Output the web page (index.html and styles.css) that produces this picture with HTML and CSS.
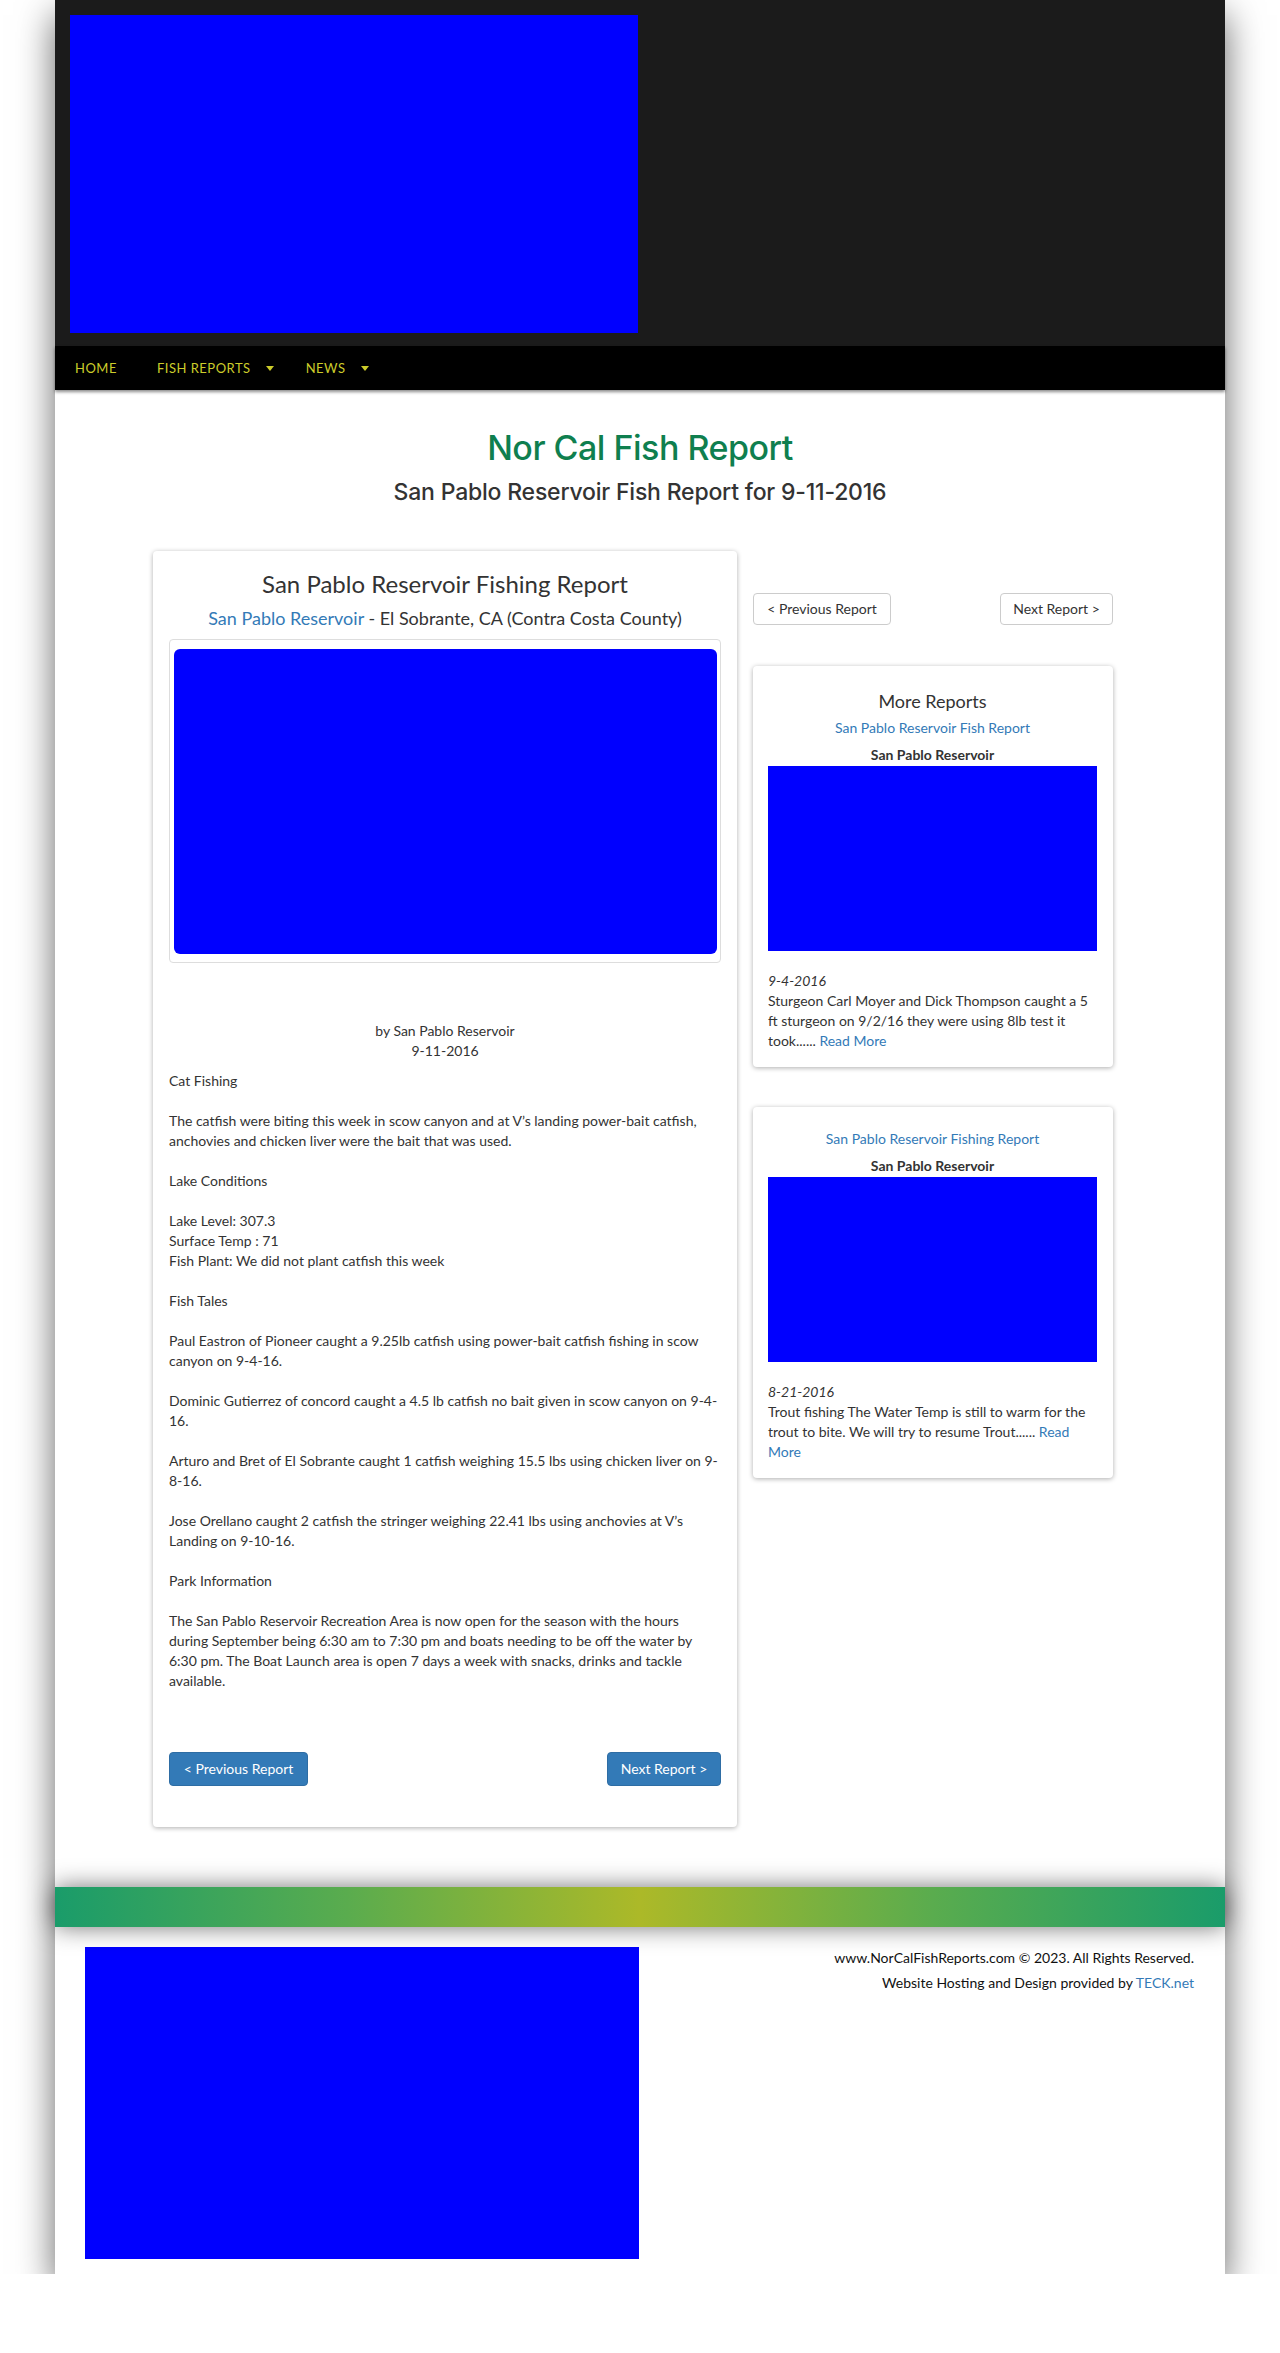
FILE: index.html
```html
<!DOCTYPE html>
<html lang="en">
<head>
<meta charset="utf-8">
<title>San Pablo Reservoir Fish Report for 9-11-2016 - Nor Cal Fish Report</title>
<link rel="stylesheet" href="styles.css">
</head>
<body>
<div class="page">
  <header class="masthead">
    <div class="logo"></div>
  </header>
  <nav class="nav">
    <a class="nav-item" href="#">HOME</a>
    <a class="nav-item has-caret" href="#">FISH REPORTS<span class="caret"></span></a>
    <a class="nav-item has-caret" href="#">NEWS<span class="caret"></span></a>
  </nav>

  <main class="main">
    <div class="titles">
      <h1 class="site-title">Nor Cal Fish Report</h1>
      <h2 class="page-title">San Pablo Reservoir Fish Report for 9-11-2016</h2>
    </div>

    <div class="row">
      <article class="card report">
        <h3 class="report-title">San Pablo Reservoir Fishing Report</h3>
        <div class="report-loc"><a href="#">San Pablo Reservoir</a> - El Sobrante, CA (Contra Costa County)</div>
        <div class="thumb"><div class="thumb-img"></div></div>
        <div class="byline">by San Pablo Reservoir<br>9-11-2016</div>
        <div class="report-body">
          <p>Cat Fishing</p>
          <p>The catfish were biting this week in scow canyon and at V’s landing power-bait catfish, anchovies and chicken liver were the bait that was used.</p>
          <p>Lake Conditions</p>
          <p>Lake Level: 307.3<br>Surface Temp : 71<br>Fish Plant: We did not plant catfish this week</p>
          <p>Fish Tales</p>
          <p>Paul Eastron of Pioneer caught a 9.25lb catfish using power-bait catfish fishing in scow canyon on 9-4-16.</p>
          <p>Dominic Gutierrez of concord caught a 4.5 lb catfish no bait given in scow canyon on 9-4-16.</p>
          <p>Arturo and Bret of El Sobrante caught 1 catfish weighing 15.5 lbs using chicken liver on 9-8-16.</p>
          <p>Jose Orellano caught 2 catfish the stringer weighing 22.41 lbs using anchovies at V’s Landing on 9-10-16.</p>
          <p>Park Information</p>
          <p>The San Pablo Reservoir Recreation Area is now open for the season with the hours during September being 6:30 am to 7:30 pm and boats needing to be off the water by 6:30 pm. The Boat Launch area is open 7 days a week with snacks, drinks and tackle available.</p>
        </div>
        <div class="pager">
          <a class="btn btn-primary prev" href="#">&lt; Previous Report</a>
          <a class="btn btn-primary next" href="#">Next Report &gt;</a>
        </div>
      </article>

      <aside class="side">
        <div class="pager side-pager">
          <a class="btn btn-default prev" href="#">&lt; Previous Report</a>
          <a class="btn btn-default next" href="#">Next Report &gt;</a>
        </div>

        <div class="card mini">
          <h4 class="mini-heading">More Reports</h4>
          <a class="mini-link" href="#">San Pablo Reservoir Fish Report</a>
          <div class="mini-name">San Pablo Reservoir</div>
          <div class="mini-img"></div>
          <div class="mini-date">9-4-2016</div>
          <div class="mini-text">Sturgeon Carl Moyer and Dick Thompson caught a 5 ft sturgeon on 9/2/16 they were using 8lb test it took...... <a href="#">Read More</a></div>
        </div>

        <div class="card mini">
          <a class="mini-link" href="#">San Pablo Reservoir Fishing Report</a>
          <div class="mini-name">San Pablo Reservoir</div>
          <div class="mini-img"></div>
          <div class="mini-date">8-21-2016</div>
          <div class="mini-text">Trout fishing The Water Temp is still to warm for the trout to bite. We will try to resume Trout...... <a href="#">Read More</a></div>
        </div>
      </aside>
    </div>
  </main>

  <div class="footer-bar"></div>
  <footer class="footer">
    <div class="footer-logo"></div>
    <div class="footer-text">
      <p>www.NorCalFishReports.com © 2023. All Rights Reserved.</p>
      <p>Website Hosting and Design provided by <a href="#">TECK.net</a></p>
    </div>
  </footer>
</div>
</body>
</html>
```

FILE: styles.css
```css
* { box-sizing: border-box; }

html, body {
  margin: 0;
  padding: 0;
  background: #fff;
}

body {
  font-family: "Lato", "Liberation Sans", sans-serif;
  font-size: 14px;
  line-height: 20px;
  color: #333;
}

a { color: #337ab7; text-decoration: none; }

.page {
  width: 1170px;
  margin: 0 auto;
  background: #fff;
  box-shadow: 0 15px 35px rgba(0, 0, 0, 0.6);
}

/* Header */
.masthead {
  background: #1b1b1b;
  padding: 15px 15px 13px;
}

.logo {
  width: 568px;
  height: 318px;
  background: #0000ff;
}

.nav {
  display: flex;
  align-items: center;
  height: 44px;
  background: #000;
  padding-left: 20px;
  box-shadow: 0 2px 3px rgba(0, 0, 0, 0.45);
  position: relative;
}

.nav-item {
  display: flex;
  align-items: center;
  color: #cccc2a;
  font-size: 13px;
  letter-spacing: 0.5px;
  margin-right: 40px;
}

.nav-item.has-caret {
  margin-right: 32px;
}

.caret {
  display: inline-block;
  width: 0;
  height: 0;
  margin-left: 15px;
  border-left: 4px solid transparent;
  border-right: 4px solid transparent;
  border-top: 5px solid #cccc2a;
}

/* Main */
.main {
  padding: 0 98px 60px;
}

.titles {
  text-align: center;
  padding-top: 38px;
}

.site-title {
  font-family: "Inter", "Liberation Sans", sans-serif;
  font-weight: 500;
  font-size: 34px;
  line-height: 40px;
  color: #0f7f4f;
  margin: 0;
  letter-spacing: -0.5px;
}

.page-title {
  font-family: "Inter", "Liberation Sans", sans-serif;
  font-weight: 500;
  font-size: 23px;
  line-height: 30px;
  color: #333;
  margin: 9px 0 0;
  letter-spacing: -0.2px;
}

.row {
  display: flex;
  align-items: flex-start;
  gap: 16px;
  margin-top: 44px;
}

.card {
  background: #fff;
  border-radius: 4px;
  box-shadow: 0 1px 5px rgba(0, 0, 0, 0.32);
}

.report {
  width: 584px;
  padding: 16px 16px 41px;
}

.report-title {
  margin: 0;
  font-size: 24px;
  line-height: 34px;
  font-weight: 400;
  text-align: center;
  color: #333;
}

.report-loc {
  text-align: center;
  font-size: 18px;
  line-height: 22px;
  margin-top: 6px;
}

.thumb {
  margin-top: 10px;
  border: 1px solid #ddd;
  border-radius: 4px;
  padding: 9px 3px 8px 4px;
}

.thumb-img {
  height: 305px;
  background: #0000ff;
  border-radius: 6px;
}

.byline {
  margin-top: 58px;
  text-align: center;
}

.report-body {
  margin-top: 10px;
}

.report-body p {
  margin: 0 0 20px;
}

.report-body p:last-child { margin-bottom: 0; }

.pager {
  display: flex;
  justify-content: space-between;
}

.report .pager {
  margin-top: 61px;
}

.btn {
  display: inline-flex;
  align-items: center;
  justify-content: center;
  border-radius: 4px;
  border: 1px solid transparent;
  font-size: 14px;
}

.btn-primary {
  height: 34px;
  background: #337ab7;
  border-color: #2e6da4;
  color: #fff;
}

.btn-primary.prev { width: 139px; }
.btn-primary.next { width: 114px; }

.btn-default {
  height: 32px;
  background: #fff;
  border-color: #ccc;
  color: #333;
  font-size: 14px;
}

.btn-default.prev { width: 138px; }
.btn-default.next { width: 113px; }

/* Side */
.side {
  width: 360px;
  display: flex;
  flex-direction: column;
}

.side-pager {
  margin-top: 42px;
}

.mini {
  margin-top: 41px;
  padding: 15px 16px 16px 15px;
  text-align: center;
}

.side .mini + .mini { margin-top: 40px; }

.mini-heading {
  margin: 10px 0 0;
  font-size: 18px;
  line-height: 20px;
  font-weight: 400;
  color: #333;
}

.mini-link {
  display: block;
  margin-top: 7px;
}

.mini-name {
  margin-top: 7px;
  font-weight: 700;
  font-size: 14px;
}

.mini-img {
  height: 185px;
  margin-top: 1px;
  background: #0000ff;
}

.mini-date {
  margin-top: 20px;
  font-style: italic;
  text-align: left;
}

.mini-text {
  text-align: left;
}

/* Footer */
.footer-bar {
  height: 40px;
  background: linear-gradient(to right, #1a9c6a 0%, #5aac4e 25%, #acb928 50%, #5aac4e 75%, #1a9c6a 100%);
  box-shadow: 0 0 25px rgba(0, 0, 0, 0.55);
  position: relative;
}

.footer {
  display: flex;
  justify-content: space-between;
  align-items: flex-start;
  padding: 20px 31px 15px 30px;
}

.footer-logo {
  width: 554px;
  height: 312px;
  background: #0000ff;
}

.footer-text {
  text-align: right;
  font-size: 14px;
  color: #111;
}

.footer-text p {
  margin: 1px 0 5px;
}
```
